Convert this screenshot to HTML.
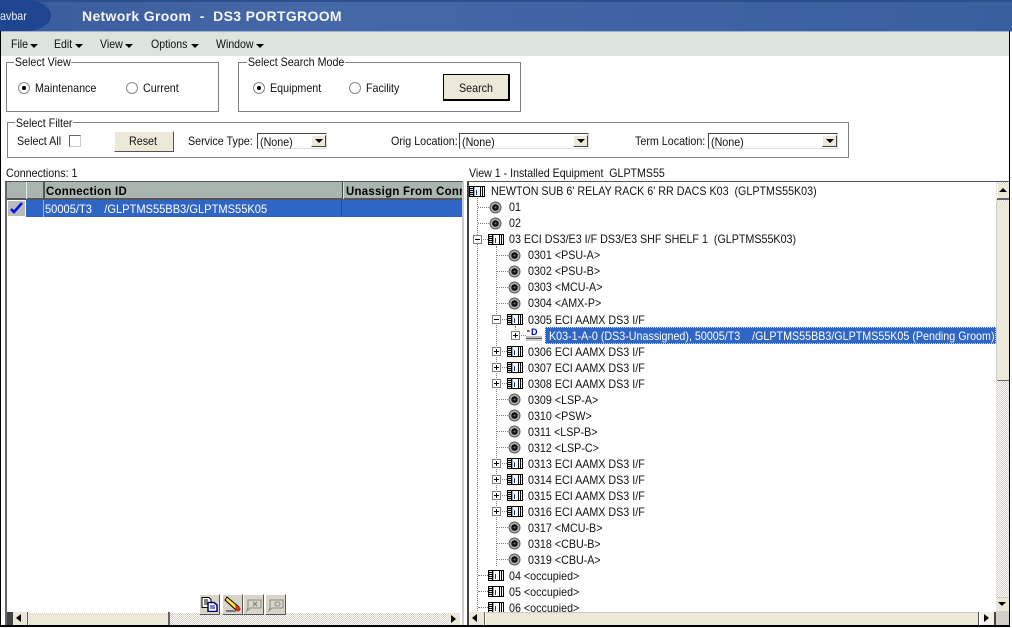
<!DOCTYPE html>
<html><head><meta charset="utf-8"><style>
html,body{margin:0;padding:0;background:#fff}
#p{position:relative;width:1012px;height:628px;overflow:hidden;background:#fff;font:12px "Liberation Sans",sans-serif;color:#111}
#p div,#p span.a,#p svg{position:absolute}
.t{white-space:pre;line-height:14px;height:14px;font-size:12px;margin-top:1px;transform:scaleX(.893);transform-origin:0 0}
.m{font-size:12px;transform:scaleX(.88)}
.b{font-weight:bold;color:#000;letter-spacing:.3px;transform:scaleX(.95)}
.up{margin-top:0}
.fs{border:1px solid #808080;box-sizing:border-box}
.lg{background:#fff;padding:0 1px;margin-top:0}
.btn{background:#ece9d8;box-sizing:border-box;border:1px solid;border-color:#fff #555 #555 #fff;text-align:center}
.cb{background:#fff;box-sizing:border-box;border:1px solid;border-color:#444 #ddd #ddd #444;height:16px}
.dd{background:#ece9d8;box-sizing:border-box;border:1px solid;border-color:#fff #444 #444 #fff;width:15px;height:12px;top:1px}
.dd:after{content:"";position:absolute;left:3px;top:3px;border:4px solid transparent;border-top:4px solid #000;border-bottom:0}
.box{width:9px;height:9px;box-sizing:border-box;border:1px solid #808080;background:#fff}
.box:before{content:"";position:absolute;left:1px;top:3px;width:5px;height:1px;background:#000}
.pl:after{content:"";position:absolute;left:3px;top:1px;width:1px;height:5px;background:#000}
.dh{height:0;border-top:1px dotted #808080}
.dv{width:0;border-left:1px dotted #808080}
.ar{border:4px solid transparent;border-top:4px solid #000;border-bottom:0;top:44px}
.dith{background-color:#fff;background-image:linear-gradient(45deg,#d4d0c8 25%,transparent 25%,transparent 75%,#d4d0c8 75%),linear-gradient(45deg,#d4d0c8 25%,transparent 25%,transparent 75%,#d4d0c8 75%);background-size:2px 2px;background-position:0 0,1px 1px}
.sb{background:#ece9d8;box-sizing:border-box}
.tb{background:#d8d5c8;box-sizing:border-box;border:1px solid;border-color:#fff #555 #555 #fff;width:21px;height:21px;top:594px}
</style></head><body><div id="p">
<svg width="0" height="0" style="left:0;top:0"><defs>
<symbol id="k" viewBox="0 0 16 11"><rect width="16" height="11" fill="#000"/><path d="M1 1h3v1H1zM1 3h3v1H1zM1 5h3v1H1zM1 7h3v1H1zM1 9h3v1H1z" fill="#ddd"/><rect x="5" y="1" width="6" height="9" fill="#fff"/><rect x="5" y="1" width="1" height="9" fill="#aaa"/><rect x="7" y="4" width="1" height="5" fill="#1030c0"/><path d="M12 1h1v9h-1zM14 1h1v9h-1z" fill="#fff"/></symbol>
<symbol id="c" viewBox="0 0 13 13"><circle cx="6.500" cy="6.500" r="6" fill="#666"/><circle cx="6.500" cy="6.500" r="4.800" fill="#b5b5b5"/><circle cx="6.500" cy="6.500" r="3.300" fill="#111"/><circle cx="6.500" cy="6.500" r="1" fill="#777"/></symbol>
</defs></svg>

<!-- title bar -->
<div style="left:0;top:0;width:1012px;height:31px;background:linear-gradient(90deg,#3a5b9c 0,#4568a8 30%,#3f63a4 60%,#3a5f9f 100%)"></div>
<div style="left:0;top:0;width:1012px;height:2px;background:#2e4f8e"></div>
<div style="left:-20px;top:0;width:71px;height:31px;background:#1f4490;border-radius:0 26px 26px 0/0 16px 16px 0"></div>
<div class="t" style="left:0;top:8px;color:#e8eefc;font-size:12px">avbar</div>
<div class="t" style="left:82px;top:8px;color:#fff;font-weight:bold;font-size:14px;letter-spacing:.33px;transform:none;opacity:.95">Network Groom  -  DS3 PORTGROOM</div>
<div style="left:0;top:31px;width:1012px;height:1px;background:#9fb0c8"></div>
<!-- menu -->
<div style="left:1px;top:32px;width:1008px;height:24px;background:#dde3dd"></div>
<div class="t m" style="left:11px;top:36px">File</div><div class="ar" style="left:30px"></div>
<div class="t m" style="left:54px;top:36px">Edit</div><div class="ar" style="left:75px"></div>
<div class="t m" style="left:100px;top:36px">View</div><div class="ar" style="left:125px"></div>
<div class="t m" style="left:151px;top:36px">Options</div><div class="ar" style="left:191px"></div>
<div class="t m" style="left:216px;top:36px">Window</div><div class="ar" style="left:256px"></div>

<!-- Select View -->
<div class="fs" style="left:6px;top:62px;width:213px;height:50px"></div>
<div class="lg t" style="left:14px;top:55px;clip-path:inset(1px 0 0 0)">Select View</div>
<svg style="left:18px;top:82px" width="12" height="12"><circle cx="6" cy="6" r="5.500" fill="#fff" stroke="#888"/><circle cx="6" cy="6" r="2" fill="#000"/></svg>
<div class="t" style="left:35px;top:80px">Maintenance</div>
<svg style="left:126px;top:82px" width="12" height="12"><circle cx="6" cy="6" r="5.500" fill="#fff" stroke="#888"/></svg>
<div class="t" style="left:143px;top:80px">Current</div>

<!-- Select Search Mode -->
<div class="fs" style="left:238px;top:62px;width:283px;height:50px"></div>
<div class="lg t" style="left:247px;top:55px;clip-path:inset(1px 0 0 0)">Select Search Mode</div>
<svg style="left:253px;top:82px" width="12" height="12"><circle cx="6" cy="6" r="5.500" fill="#fff" stroke="#888"/><circle cx="6" cy="6" r="2" fill="#000"/></svg>
<div class="t" style="left:270px;top:80px">Equipment</div>
<svg style="left:349px;top:82px" width="12" height="12"><circle cx="6" cy="6" r="5.500" fill="#fff" stroke="#888"/></svg>
<div class="t" style="left:366px;top:80px">Facility</div>
<div class="btn" style="left:443px;top:74px;width:67px;height:27px;border:1px solid #000;border-right-width:2px;border-bottom-width:2px"><div class="t" style="left:15px;top:5px">Search</div></div>

<!-- Select Filter -->
<div class="fs" style="left:7px;top:122px;width:842px;height:36px"></div>
<div class="lg t" style="left:15px;top:116px">Select Filter</div>
<div class="t" style="left:17px;top:133px">Select All</div>
<div style="left:69px;top:135px;width:12px;height:12px;box-sizing:border-box;border:1px solid;border-color:#666 #ccc #ccc #666;background:#fff"></div>
<div class="btn" style="left:114px;top:131px;width:60px;height:21px"><div class="t" style="left:14px;top:1px">Reset</div></div>
<div class="t" style="left:188px;top:133px">Service Type:</div>
<div class="cb" style="left:257px;top:133px;width:70px"><div class="t" style="left:2px;top:0">(None)</div><div class="dd" style="left:53px"></div></div>
<div class="t" style="left:391px;top:133px">Orig Location:</div>
<div class="cb" style="left:459px;top:133px;width:130px"><div class="t" style="left:2px;top:0">(None)</div><div class="dd" style="left:113px"></div></div>
<div class="t" style="left:635px;top:133px">Term Location:</div>
<div class="cb" style="left:708px;top:133px;width:130px"><div class="t" style="left:2px;top:0">(None)</div><div class="dd" style="left:113px"></div></div>

<div class="t" style="left:6px;top:165px">Connections: 1</div>
<div class="t" style="left:469px;top:165px;transform:scaleX(.885)">View 1 - Installed Equipment  GLPTMS55</div>

<!-- left table -->
<div style="left:5px;top:181px;width:458px;height:1px;background:#555"></div>
<div style="left:5px;top:182px;width:2px;height:443px;background:#666"></div>
<div style="left:462px;top:182px;width:2px;height:443px;background:#ccc"></div>
<div style="left:7px;top:182px;width:455px;height:17px;background:#a9b5ae"></div>
<div style="left:7px;top:198px;width:455px;height:2px;background:#555"></div>
<div style="left:26px;top:182px;width:1px;height:17px;background:#e8e8e8"></div>
<div style="left:43px;top:182px;width:2px;height:17px;background:#555"></div>
<div style="left:342px;top:182px;width:1px;height:17px;background:#444"></div>
<div style="left:343px;top:182px;width:1px;height:17px;background:#ddd"></div>
<div class="t b" style="left:46px;top:183px">Connection ID</div>
<div style="left:346px;top:182px;width:116px;height:17px;overflow:hidden"><div class="t b" style="left:0;top:1px">Unassign From Conn</div></div>
<div style="left:7px;top:200px;width:455px;height:17px;background:#2f66c6"></div>
<div style="left:7px;top:200px;width:19px;height:17px;background:#b8bcc0;border:1px solid #fff;box-sizing:border-box"></div>
<svg style="left:9px;top:201px" width="15" height="13"><path d="M2 8L5 11L13 2" fill="none" stroke="#0a10e0" stroke-width="2.500"/></svg>
<div style="left:43px;top:200px;width:1px;height:17px;background:#9fb5dc"></div>
<div style="left:341px;top:200px;width:1px;height:17px;background:#1d4a9a"></div>
<div class="t" style="left:45px;top:201px;color:#fff;transform:scaleX(.925)">50005/T3    /GLPTMS55BB3/GLPTMS55K05</div>

<!-- left hscroll -->
<div class="dith" style="left:7px;top:613px;width:453px;height:12px"></div>
<div style="left:7px;top:612px;width:6px;height:13px;background:#444"></div>
<div class="sb" style="left:13px;top:612px;width:14px;height:13px"><div style="left:3px;top:2px;border:4px solid transparent;border-right:5px solid #000;border-left:0"></div></div>
<div style="left:27px;top:612px;width:1px;height:13px;background:#666"></div>
<div class="sb" style="left:30px;top:614px;width:138px;height:11px"></div>
<div style="left:168px;top:612px;width:2px;height:13px;background:#666"></div>
<div class="sb" style="left:447px;top:614px;width:13px;height:11px"><div style="left:4px;top:1px;border:4px solid transparent;border-left:5px solid #000;border-right:0"></div></div>

<!-- toolbar -->
<div class="tb" style="left:199px"></div><div class="tb" style="left:222px"></div><div class="tb" style="left:243px"></div><div class="tb" style="left:265px"></div>
<svg style="left:201px;top:597px" width="17" height="15"><path d="M1 .5h7l2 2v8H1z" fill="#fff" stroke="#000"/><path d="M3 3h4M3 5h4M3 7h4" stroke="#000"/><path d="M7 5.500h6l3 2.500v6.500H7z" fill="#fff" stroke="#00007a" stroke-width="1.500"/><path d="M9 9h5M9 11h5" stroke="#00007a"/></svg>
<svg style="left:224px;top:596px" width="18" height="17"><path d="M3 1L15 11L12 14L1 4z" fill="#ffe040" stroke="#000"/><path d="M11 9l4 2l-3 3z" fill="#e04010"/><path d="M2 15h10" stroke="#777" stroke-width="2"/><circle cx="14" cy="13" r="2.500" fill="#d03010"/></svg>
<svg style="left:245px;top:597px" width="17" height="15"><path d="M3 3h13v8H5l-3 3 1-4z" fill="none" stroke="#8a8a80"/><path d="M8 5l4 4M12 5l-4 4" stroke="#8a8a80" stroke-width="1.300"/></svg>
<svg style="left:267px;top:597px" width="17" height="15"><path d="M3 3h13v8H5l-3 3 1-4z" fill="none" stroke="#8a8a80"/><rect x="8" y="5" width="5" height="4" rx="2" fill="none" stroke="#8a8a80"/></svg>

<!-- right tree frame -->
<div style="left:467px;top:181px;width:542px;height:1px;background:#555"></div>
<div style="left:467px;top:182px;width:2px;height:443px;background:#444"></div>

<!-- guide lines -->
<div class="dv" style="left:477px;top:198px;height:425px"></div>
<div class="dv" style="left:496px;top:246px;height:320px"></div>
<div class="dv" style="left:515px;top:326px;height:8px"></div>

<!-- tree rows -->
<svg style="left:469px;top:186px" width="16" height="11"><use href="#k"/></svg>
<div class="t up" style="left:491px;top:184px">NEWTON SUB 6' RELAY RACK 6' RR DACS K03  (GLPTMS55K03)</div>

<div class="dh" style="left:478px;top:207px;width:11px"></div><svg style="left:489px;top:201px" width="13" height="13"><use href="#c"/></svg><div class="t up" style="left:509px;top:200px">01</div>
<div class="dh" style="left:478px;top:223px;width:11px"></div><svg style="left:489px;top:217px" width="13" height="13"><use href="#c"/></svg><div class="t up" style="left:509px;top:216px">02</div>
<div class="dh" style="left:478px;top:239px;width:10px"></div><div class="box" style="left:473px;top:235px"></div><svg style="left:488px;top:234px" width="16" height="11"><use href="#k"/></svg><div class="t up" style="left:509px;top:232px">03 ECI DS3/E3 I/F DS3/E3 SHF SHELF 1  (GLPTMS55K03)</div>

<div class="dh" style="left:497px;top:255px;width:11px"></div><svg style="left:508px;top:249px" width="13" height="13"><use href="#c"/></svg><div class="t up" style="left:528px;top:248px">0301 &lt;PSU-A&gt;</div>
<div class="dh" style="left:497px;top:271px;width:11px"></div><svg style="left:508px;top:265px" width="13" height="13"><use href="#c"/></svg><div class="t up" style="left:528px;top:264px">0302 &lt;PSU-B&gt;</div>
<div class="dh" style="left:497px;top:287px;width:11px"></div><svg style="left:508px;top:281px" width="13" height="13"><use href="#c"/></svg><div class="t up" style="left:528px;top:280px">0303 &lt;MCU-A&gt;</div>
<div class="dh" style="left:497px;top:303px;width:11px"></div><svg style="left:508px;top:297px" width="13" height="13"><use href="#c"/></svg><div class="t up" style="left:528px;top:296px">0304 &lt;AMX-P&gt;</div>

<div class="dh" style="left:497px;top:319px;width:10px"></div><div class="box" style="left:492px;top:315px"></div><svg style="left:507px;top:314px" width="16" height="11"><use href="#k"/></svg><div class="t" style="left:528px;top:312px">0305 ECI AAMX DS3 I/F</div>

<div class="dh" style="left:516px;top:335px;width:10px"></div><div class="box pl" style="left:511px;top:331px"></div>
<svg style="left:526px;top:328px" width="17" height="14"><path d="M1 3h3M2 2v2" stroke="#c00000" stroke-width="1"/><text x="5" y="7" font-family="Liberation Sans" font-size="9" font-weight="bold" fill="#0000e0">D</text><rect x="0" y="8" width="16" height="2" fill="#c0c0c0"/><rect x="0" y="10" width="16" height="1" fill="#555"/><rect x="0" y="11" width="16" height="2" fill="#d0d0d0"/></svg>
<div style="left:545px;top:327px;width:451px;height:17px;background:#2f66c6;outline:1px dotted #e8d890;outline-offset:-1px"></div>
<div class="t" style="left:549px;top:328px;color:#fff">K03-1-A-0 (DS3-Unassigned), 50005/T3    /GLPTMS55BB3/GLPTMS55K05 (Pending Groom)</div>

<div class="dh" style="left:497px;top:351px;width:10px"></div><div class="box pl" style="left:492px;top:347px"></div><svg style="left:507px;top:346px" width="16" height="11"><use href="#k"/></svg><div class="t" style="left:528px;top:344px">0306 ECI AAMX DS3 I/F</div>
<div class="dh" style="left:497px;top:367px;width:10px"></div><div class="box pl" style="left:492px;top:363px"></div><svg style="left:507px;top:362px" width="16" height="11"><use href="#k"/></svg><div class="t" style="left:528px;top:360px">0307 ECI AAMX DS3 I/F</div>
<div class="dh" style="left:497px;top:383px;width:10px"></div><div class="box pl" style="left:492px;top:379px"></div><svg style="left:507px;top:378px" width="16" height="11"><use href="#k"/></svg><div class="t" style="left:528px;top:376px">0308 ECI AAMX DS3 I/F</div>

<div class="dh" style="left:497px;top:399px;width:11px"></div><svg style="left:508px;top:393px" width="13" height="13"><use href="#c"/></svg><div class="t" style="left:528px;top:392px">0309 &lt;LSP-A&gt;</div>
<div class="dh" style="left:497px;top:415px;width:11px"></div><svg style="left:508px;top:409px" width="13" height="13"><use href="#c"/></svg><div class="t" style="left:528px;top:408px">0310 &lt;PSW&gt;</div>
<div class="dh" style="left:497px;top:431px;width:11px"></div><svg style="left:508px;top:425px" width="13" height="13"><use href="#c"/></svg><div class="t" style="left:528px;top:424px">0311 &lt;LSP-B&gt;</div>
<div class="dh" style="left:497px;top:447px;width:11px"></div><svg style="left:508px;top:441px" width="13" height="13"><use href="#c"/></svg><div class="t" style="left:528px;top:440px">0312 &lt;LSP-C&gt;</div>

<div class="dh" style="left:497px;top:463px;width:10px"></div><div class="box pl" style="left:492px;top:459px"></div><svg style="left:507px;top:458px" width="16" height="11"><use href="#k"/></svg><div class="t" style="left:528px;top:456px">0313 ECI AAMX DS3 I/F</div>
<div class="dh" style="left:497px;top:479px;width:10px"></div><div class="box pl" style="left:492px;top:475px"></div><svg style="left:507px;top:474px" width="16" height="11"><use href="#k"/></svg><div class="t" style="left:528px;top:472px">0314 ECI AAMX DS3 I/F</div>
<div class="dh" style="left:497px;top:495px;width:10px"></div><div class="box pl" style="left:492px;top:491px"></div><svg style="left:507px;top:490px" width="16" height="11"><use href="#k"/></svg><div class="t" style="left:528px;top:488px">0315 ECI AAMX DS3 I/F</div>
<div class="dh" style="left:497px;top:511px;width:10px"></div><div class="box pl" style="left:492px;top:507px"></div><svg style="left:507px;top:506px" width="16" height="11"><use href="#k"/></svg><div class="t" style="left:528px;top:504px">0316 ECI AAMX DS3 I/F</div>

<div class="dh" style="left:497px;top:527px;width:11px"></div><svg style="left:508px;top:521px" width="13" height="13"><use href="#c"/></svg><div class="t" style="left:528px;top:520px">0317 &lt;MCU-B&gt;</div>
<div class="dh" style="left:497px;top:543px;width:11px"></div><svg style="left:508px;top:537px" width="13" height="13"><use href="#c"/></svg><div class="t" style="left:528px;top:536px">0318 &lt;CBU-B&gt;</div>
<div class="dh" style="left:497px;top:559px;width:11px"></div><svg style="left:508px;top:553px" width="13" height="13"><use href="#c"/></svg><div class="t" style="left:528px;top:552px">0319 &lt;CBU-A&gt;</div>

<div class="dh" style="left:478px;top:575px;width:10px"></div><svg style="left:488px;top:570px" width="16" height="11"><use href="#k"/></svg><div class="t" style="left:509px;top:568px">04 &lt;occupied&gt;</div>
<div class="dh" style="left:478px;top:591px;width:10px"></div><svg style="left:488px;top:586px" width="16" height="11"><use href="#k"/></svg><div class="t" style="left:509px;top:584px">05 &lt;occupied&gt;</div>
<div class="dh" style="left:478px;top:607px;width:10px"></div><svg style="left:488px;top:602px" width="16" height="11"><use href="#k"/></svg><div class="t" style="left:509px;top:600px">06 &lt;occupied&gt;</div>

<!-- right vscroll -->
<div class="dith" style="left:996px;top:182px;width:13px;height:430px"></div>
<div class="sb" style="left:997px;top:184px;width:12px;height:14px;border-left:1px solid #fff"><div style="left:1px;top:4px;border:4px solid transparent;border-bottom:4px solid #000;border-top:0"></div></div>
<div style="left:997px;top:198px;width:12px;height:2px;background:#666"></div>
<div class="sb" style="left:997px;top:201px;width:12px;height:179px"></div>
<div style="left:996px;top:201px;width:1px;height:179px;background:#ccc"></div>
<div style="left:997px;top:380px;width:12px;height:1px;background:#666"></div>
<div class="sb" style="left:997px;top:597px;width:12px;height:14px;border-top:1px solid #ccc"><div style="left:1px;top:4px;border:4px solid transparent;border-top:4px solid #000;border-bottom:0"></div></div>
<div style="left:996px;top:611px;width:13px;height:14px;background:#d4d0c8"></div>

<!-- right hscroll -->
<div class="sb" style="left:469px;top:612px;width:15px;height:13px"><div style="left:3px;top:2px;border:4px solid transparent;border-right:5px solid #000;border-left:0"></div></div>
<div style="left:484px;top:612px;width:1px;height:13px;background:#666"></div>
<div class="sb" style="left:486px;top:612px;width:492px;height:13px;border-top:1px solid #ccc"></div>
<div style="left:978px;top:612px;width:1px;height:13px;background:#555"></div>
<div style="left:979px;top:612px;width:1px;height:13px;background:#fff"></div>
<div class="sb" style="left:981px;top:612px;width:13px;height:13px;background:#f4f2e8"><div style="left:3px;top:2px;border:4px solid transparent;border-left:5px solid #000;border-right:0"></div></div>
<div style="left:994px;top:612px;width:2px;height:13px;background:#444"></div>

<!-- window border -->
<div style="left:0;top:31px;width:1px;height:595px;background:#000"></div>
<div style="left:1009px;top:31px;width:1px;height:595px;background:#000"></div>
<div style="left:0;top:625px;width:1010px;height:2px;background:#000"></div>
</div></body></html>
